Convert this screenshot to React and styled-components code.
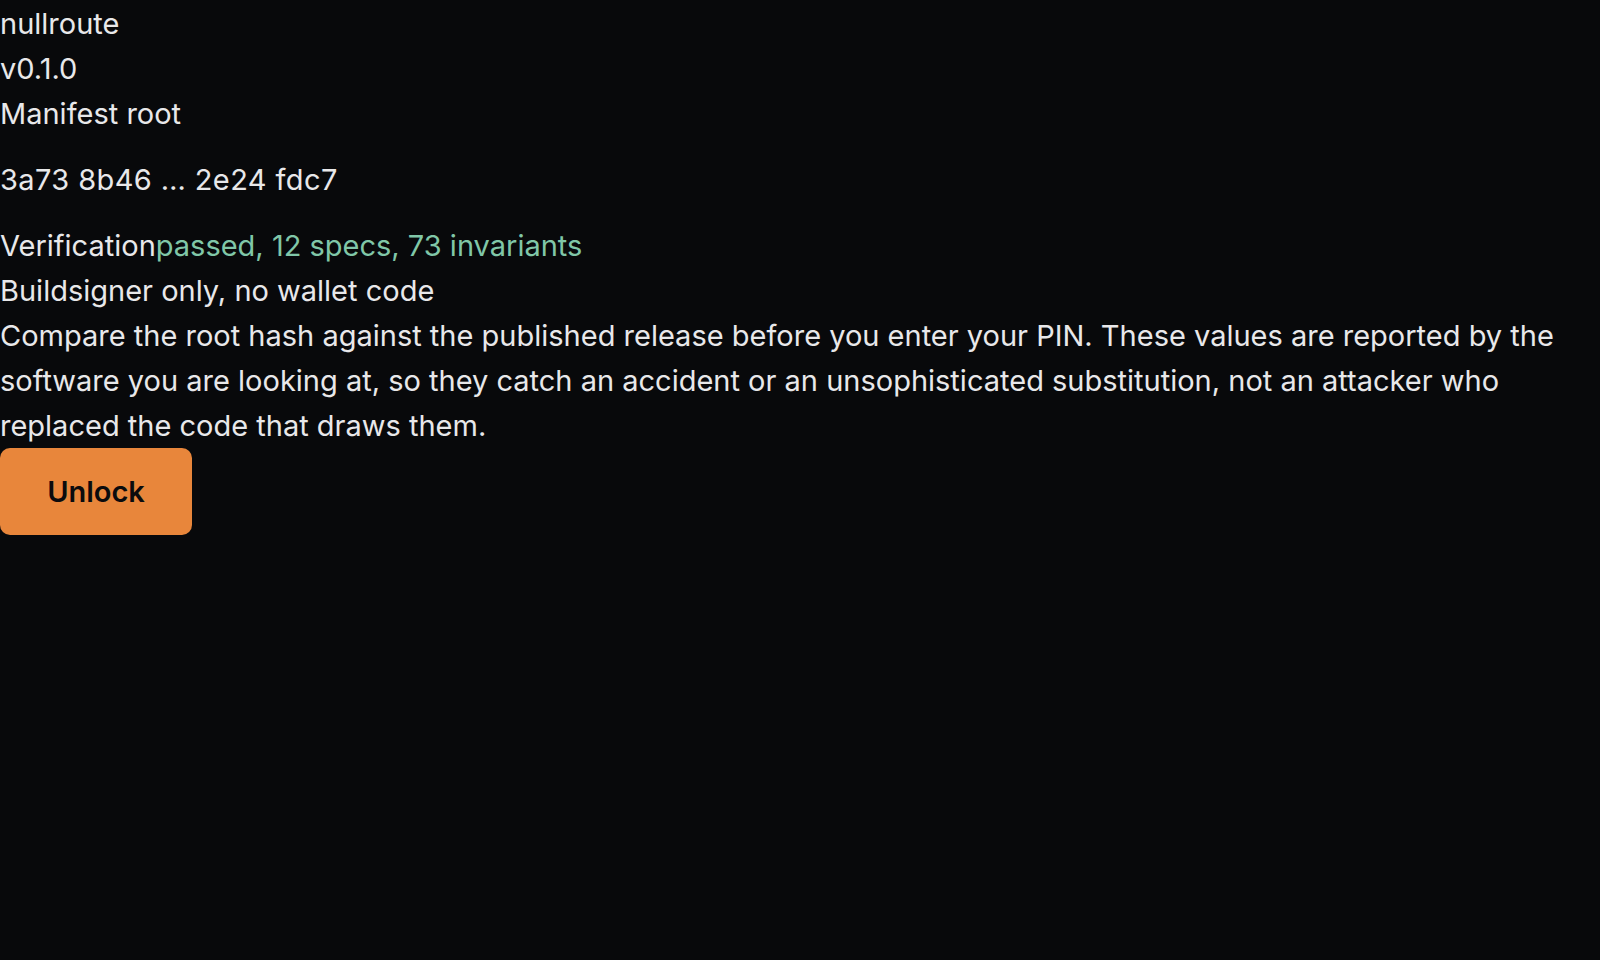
import React from "react";
import styled, { createGlobalStyle } from "styled-components";

const GlobalStyle = createGlobalStyle`
  html, body {
    margin: 0;
    padding: 0;
    background: #08090b;
  }
  body {
    font-family: Inter, "Noto Sans", sans-serif;
    color: #e8e8ea;
  }
`;

const Page = styled.div`
  min-height: 100vh;
  padding-top: 1px;
  box-sizing: border-box;
  font-size: 29px;
  line-height: 45px;
`;

const Line = styled.div``;

const Hash = styled.div`
  margin: 21px 0;
  letter-spacing: 0.4px;
`;

const Good = styled.span`
  color: #80c7a8;
`;

const Note = styled.p`
  margin: 0;
`;

const UnlockButton = styled.button`
  display: block;
  width: 192px;
  height: 87px;
  margin-top: 0;
  border: none;
  border-radius: 10px;
  background: #e8863b;
  color: #0b0b0d;
  font-family: Inter, "Noto Sans", sans-serif;
  font-size: 29px;
  font-weight: 600;
  cursor: pointer;
`;

export default function App() {
  return (
    <>
      <GlobalStyle />
      <Page>
        <Line>nullroute</Line>
        <Line>v0.1.0</Line>
        <Line>Manifest root</Line>
        <Hash>3a73 8b46 … 2e24 fdc7</Hash>
        <Line>
          Verification<Good>passed, 12 specs, 73 invariants</Good>
        </Line>
        <Line>Buildsigner only, no wallet code</Line>
        <Note>
          Compare the root hash against the published release before you enter
          your PIN. These values are reported by the software you are looking
          at, so they catch an accident or an unsophisticated substitution, not
          an attacker who replaced the code that draws them.
        </Note>
        <UnlockButton>Unlock</UnlockButton>
      </Page>
    </>
  );
}
